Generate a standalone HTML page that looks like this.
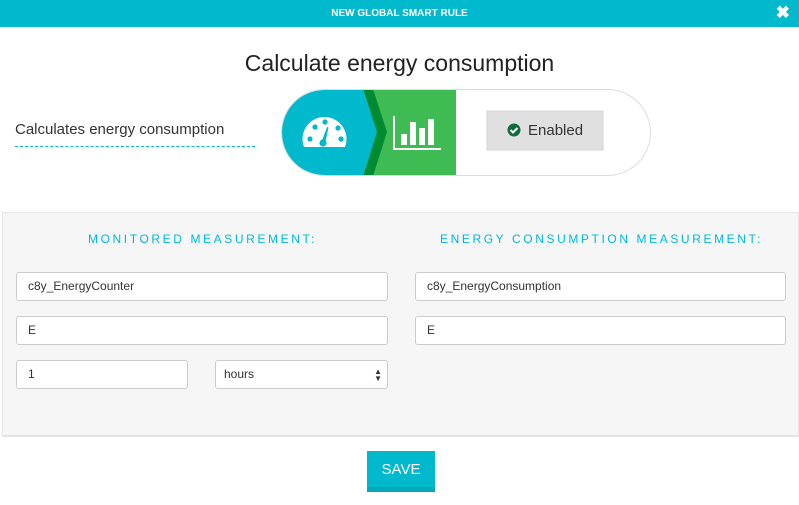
<!DOCTYPE html>
<html><head><style>
*{box-sizing:border-box;margin:0;padding:0}
body{width:799px;height:505px;background:#fff;font-family:"Liberation Sans",sans-serif;position:relative;overflow:hidden;color:#333}
.hdr{position:absolute;left:0;top:0;width:799px;height:27px;background:#00b9cc;color:#fff;font-size:10px;font-weight:bold;text-align:center;line-height:27px}
.x{position:absolute;right:9px;top:0;font-size:17px;line-height:25px}
h1{position:absolute;top:50px;width:799px;text-align:center;font-weight:normal;font-size:23px;color:#222}
.desc{position:absolute;left:15px;top:121px;font-size:15px;color:#333;width:240px;height:26px;border-bottom:1px dashed #00b9cc}
.pill{position:absolute;left:281px;top:89px;width:370px;height:87px;border:1px solid #ddd;border-radius:44px;overflow:hidden;background:#fff}
.panel{position:absolute;left:2px;top:212px;width:797px;height:225px;background:#f6f6f6;border:1px solid #e6e6e6;border-bottom:2px solid #e3e3e3}
.lbl{position:absolute;top:232px;font-size:12px;letter-spacing:2.6px;color:#00b9d8}
.in{position:absolute;height:29px;background:#fff;border:1px solid #ccc;border-radius:3px;font-size:12px;padding-left:11px;line-height:27px;color:#333}
.save{position:absolute;left:367px;top:451px;width:68px;height:41px;background:#00b9cc;border-bottom:5px solid #00a8b8;color:#fff;font-size:15px;text-align:center;line-height:37px}
</style></head><body>
<div class="hdr">NEW GLOBAL SMART RULE<span class="x">✖</span></div>
<h1>Calculate energy consumption</h1>
<div class="desc">Calculates energy consumption</div>
<div class="pill">
<svg width="370" height="87" style="position:absolute;left:-1px;top:-1px">
<rect x="90" y="0" width="85" height="87" fill="#3fbb54"/>
<polygon points="0,0 82,0 96,43 82,87 0,87" fill="#00b9cc"/>
<polygon points="82,0 92,0 106,43 92,87 82,87 96,43" fill="#008a32"/>
<path d="M23,58 A22,22 0 1 1 64,58 Z" fill="#fff"/>
<g fill="#00b9cc">
<circle cx="29" cy="50" r="2.6"/><circle cx="34" cy="38" r="2.6"/><circle cx="44" cy="33" r="2.6"/><circle cx="57" cy="39" r="2.6"/><circle cx="60" cy="50" r="2.6"/>
<circle cx="42" cy="54" r="3.6"/><path d="M40.5,53 L46,38 L47.5,38.5 L44,55Z"/>
</g>
<g fill="#fff">
<rect x="112" y="27" width="2" height="34"/><rect x="112" y="59" width="48" height="2"/>
<rect x="120" y="45" width="6" height="11"/><rect x="129" y="33" width="6" height="23"/><rect x="138" y="39" width="6" height="17"/><rect x="147" y="30" width="6" height="26"/>
</g>
<rect x="206" y="22" width="116" height="39" fill="#e0e0e0" stroke="#d4d4d4"/>
<circle cx="233" cy="41" r="6.5" fill="#116b3a"/>
<path d="M229.5,41 l2.5,2.5 l4.5,-4.5" stroke="#fff" stroke-width="2" fill="none"/>
<text x="247" y="46" font-size="15" fill="#333" font-family="Liberation Sans">Enabled</text>
</svg>
</div>
<div class="panel"></div>
<div class="lbl" style="left:88px">MONITORED MEASUREMENT:</div>
<div class="lbl" style="left:440px">ENERGY CONSUMPTION MEASUREMENT:</div>
<div class="in" style="left:16px;top:272px;width:372px">c8y_EnergyCounter</div>
<div class="in" style="left:16px;top:316px;width:372px">E</div>
<div class="in" style="left:16px;top:360px;width:172px">1</div>
<div class="in" style="left:215px;top:360px;width:173px;padding-left:8px">hours<span style="position:absolute;right:5px;top:0;font-size:8px;line-height:7px;padding-top:7px">▲<br>▼</span></div>
<div class="in" style="left:415px;top:272px;width:371px">c8y_EnergyConsumption</div>
<div class="in" style="left:415px;top:316px;width:371px">E</div>
<div class="save">SAVE</div>
</body></html>
